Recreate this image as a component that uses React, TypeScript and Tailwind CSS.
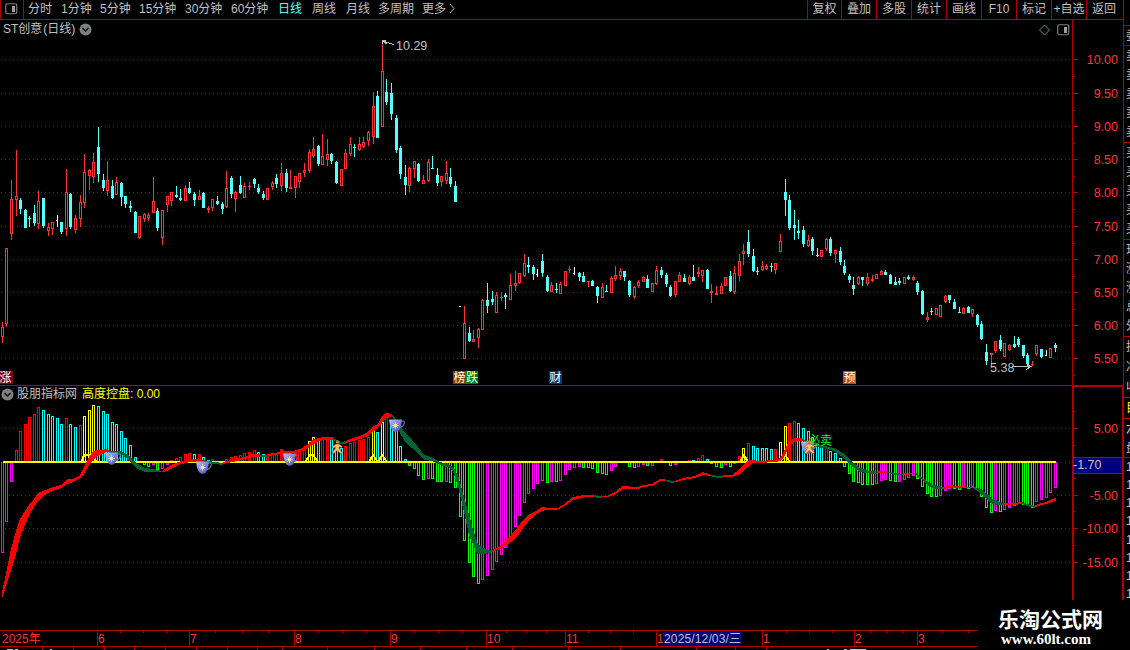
import React from 'react';

const RED = '#ff3232';
const CYAN = '#54ffff';
const FRAME = '#b00000';

const BAR_COLORS: Record<string, string> = {
    r: '#ff0000',
    c: '#00ffff',
    y: '#ffff00',
    g: '#00ff00',
    m: '#ff00ff',
};

// One entry per trading day: colour, high, body top, body bottom, low.
const CANDLES = `
r322,327,337,343 r248,248,324,327 r180,199,234,240 r150,196,200,216 c198,200,209,214 c209,210,228,228
c216,218,219,227 c205,213,223,226 r191,201,224,229 c198,198,226,228 r223,227,231,236 r222,222,229,235
w215,220,221,227 c222,222,232,234 r169,192,229,236 c193,194,227,229 r215,218,230,233 r195,202,219,227
r154,172,203,208 r169,170,176,190 r153,162,177,183 c127,147,174,182 c174,180,188,191 r161,180,191,196
c180,186,198,199 r177,182,195,195 c182,183,197,206 c196,196,204,208 c201,206,208,212 c211,212,233,233
r216,216,238,239 r213,214,219,222 r213,215,218,221 r177,201,213,213 c208,211,228,231 r210,210,238,245
r196,196,205,212 r192,192,201,206 c186,195,197,198 c189,198,200,201 r185,188,201,201 c182,188,193,194
c192,194,200,206 r190,196,200,200 c192,193,208,208 r206,208,210,213 r199,199,208,211 c196,201,204,205
c202,204,209,214 r171,188,207,208 c176,178,194,198 r191,192,199,212 c176,185,193,194 r183,186,198,198
r182,186,187,190 c178,179,184,188 c184,188,192,194 c191,194,198,200 r188,188,200,200 r181,183,187,190
c174,178,184,188 r163,173,186,191 c169,173,188,192 r170,187,189,189 r176,176,188,198 r173,173,182,188
r163,170,173,177 r149,152,171,173 r137,149,156,158 c145,146,164,166 r134,156,165,165 r139,154,160,166
c153,154,161,164 c161,162,183,184 r169,169,186,186 r149,153,169,169 r137,144,154,156 c144,147,148,157
r137,144,150,151 r137,142,147,148 r131,132,141,146 r92,106,137,144 c91,96,138,138 r43,71,127,127
c79,92,102,105 c83,93,114,120 c115,118,150,153 c146,148,174,179 c165,177,185,195 r167,168,186,192
r161,161,169,178 c163,164,181,182 r175,180,184,184 r159,162,181,182 c156,168,169,169 c168,175,183,186
r176,176,182,187 r161,173,181,184 c168,177,184,187 c181,186,202,202 w306,306,307,307 r306,323,359,359
c327,333,341,342 r330,339,342,342 r328,329,338,348 r299,300,330,330 c283,300,306,313 c291,299,302,305
r292,295,313,313 r292,297,298,301 c293,295,297,309 r274,285,300,300 r271,283,286,291 r273,273,283,284
r254,263,276,277 c257,265,267,273 c265,267,274,280 w269,274,275,277 c254,261,273,277 c275,277,291,292
r282,285,292,292 c283,289,290,293 r282,284,294,294 r271,271,286,286 r266,269,270,273 w267,273,274,275
c272,273,277,281 c272,276,282,282 r281,281,282,287 c280,281,286,286 c286,287,296,303 r283,287,298,298
c285,291,292,292 r276,278,293,293 r266,275,279,281 r268,271,276,280 c271,271,277,281 c280,281,295,297
r286,287,297,299 r280,282,286,288 r276,277,282,282 c275,279,288,288 r283,283,292,292 r266,270,284,285
c267,270,275,278 c273,275,284,287 c285,287,296,297 r281,281,295,297 r272,275,282,282 c274,278,282,282
r275,277,284,285 c265,277,281,281 r267,272,274,277 r270,270,276,282 c269,270,289,289 r284,291,293,303
r286,293,295,295 r283,286,294,294 r277,277,286,286 c271,276,291,292 r266,273,292,294 r254,261,276,281
r244,251,254,265 c230,242,254,257 c249,256,271,272 c267,271,272,275 r261,266,270,271 r264,266,269,270
c263,266,267,272 r263,263,270,274 r234,241,252,252 c179,192,200,216 c195,200,228,230 c210,225,228,240
c220,231,233,239 c226,230,244,247 r235,240,246,247 c237,239,251,255 c248,255,256,257 r250,250,257,257
r238,239,249,251 c237,239,253,256 r250,250,254,263 c247,251,262,265 c260,266,273,275 c274,276,280,283
c277,285,289,295 r276,277,284,285 c277,277,280,286 r273,277,284,286 r275,279,281,282 r274,274,279,279
r270,271,275,275 c270,272,275,275 c274,275,284,284 c277,282,285,285 c278,281,283,285 r277,277,284,284
c275,277,279,280 r276,277,280,281 c281,283,292,295 c290,291,314,315 r312,317,320,322 c308,311,312,315
r308,308,315,315 r305,305,317,317 r295,296,302,303 c295,295,300,303 c299,302,309,309 c307,312,313,313
r307,308,314,314 c306,307,313,313 r309,309,314,317 c314,315,325,327 c321,324,339,340 c344,352,361,365
r353,353,355,364 r341,341,351,353 c335,340,349,351 r343,343,357,357 r344,345,350,351 c336,344,347,348
c337,339,345,347 c345,345,356,358 c353,355,364,366 r361,364,365,366 r345,345,354,356 c349,349,357,358
w350,355,356,356 r348,348,358,358 c343,345,348,352`
    .trim()
    .split(/\s+/)
    .map(s => ({ kind: s[0], v: s.slice(1).split(',').map(Number) }));

// Histogram: colour and the y where the bar ends, "-" for an empty day.
const BARS = `
m553 m522 m482 r450 r431 r424 r417 r414 r407 c410 c414 c416 c418 c424 r418 c424 c427 r425 y416 y410
y405 c406 c411 c414 c422 c424 c431 c438 c445 c457 - g465 g467 m465 g470 m469 m465 r460 r458 r457
r454 r453 c454 r454 c457 c460 r459 - - r459 r457 r456 r455 r453 r452 r450 c452 c454 r454 r453
r453 r449 c451 c452 r452 r451 r450 y441 y437 c438 r438 r438 c439 c447 c448 r446 r443 r442 r440 r439
r437 y431 c432 y422 r415 c422 c429 c446 c459 g466 g469 g476 g480 m479 g479 g482 g482 m482 g483 g488
g517 g541 g563 g577 g584 m580 m576 m570 m562 m555 m548 m537 m527 m516 m503 m494 m489 m484 m481 g483
m482 g482 m481 m475 m470 m468 m467 g468 g468 g469 g473 g474 g475 m471 m467 - - g467 g468 m467
m465 g466 m466 - r459 - g466 m465 - - r460 c460 r458 r455 c459 g464 g467 g468 m465 g467
m464 r456 y448 r443 c446 c448 c448 c448 c449 r449 y442 y426 r423 r421 c423 c428 c431 c437 c444 c447
r447 c451 c453 c458 g467 g474 g482 g483 g485 g485 g485 m484 m481 m480 g481 g482 m482 m480 m478 m476
g479 g487 g494 g497 g497 m496 m491 m489 g489 g490 m488 g489 m487 g489 g497 g508 g513 m511 g512 m510
m508 m506 m504 g505 g506 g508 m502 m500 m498 m493 m488`
    .trim()
    .split(/\s+/);

// Trend ribbon segments: colour, then x, upper edge, lower edge.
const RIBBON: [string, number[][]][] = [
    ['r', [[2, 592, 599], [6, 574, 586], [11, 549, 571], [16, 531, 554], [20, 519, 537], [25, 511, 525], [29, 505, 516], [34, 499, 507], [38, 493, 501], [43, 491, 496], [52, 487.5, 491], [61, 485, 488], [67, 479, 484], [73, 479, 482], [80, 475.5, 478.5], [84, 467, 474], [89, 457, 465], [93, 451, 460], [98, 450, 456], [107, 449, 452], [110, 450.5, 453]]],
    ['g', [[110, 450.5, 452.5], [120, 451, 454], [127, 454, 458], [133, 460, 465], [138, 464, 469], [144, 467.5, 471.5], [152, 469, 472], [160, 470.5, 472.5], [163, 470.5, 472]]],
    ['r', [[163, 470.5, 472.5], [171, 465, 469], [180, 461.5, 464.5], [190, 459, 462], [200, 459.5, 461.5], [203, 460.5, 462]]],
    ['g', [[203, 460, 462], [215, 462, 464], [223, 463, 465]]],
    ['r', [[223, 462, 464], [235, 459, 461.5], [245, 456.5, 459], [253, 454, 456.5], [260, 454.5, 456.5]]],
    ['g', [[260, 455, 456.5], [268, 455, 457]]],
    ['r', [[268, 454.5, 456], [275, 453, 455], [282, 451, 453.5], [292, 451.5, 453.5], [300, 449, 452], [308, 444.5, 448], [313, 440, 445], [318, 438, 441.5], [323, 437, 439.5], [333, 437.5, 439.5]]],
    ['g', [[333, 438, 440], [341, 442, 444.5], [346, 441, 443.5]]],
    ['r', [[346, 441, 443], [353, 438, 441], [362, 435, 438.5], [368, 432, 436], [373, 426.5, 432], [378, 424, 428], [382, 416.5, 423], [386, 413, 418.5], [391, 414, 416.5]]],
    ['g', [[391, 414, 416], [393, 415, 418], [398, 422, 429], [405, 433, 442], [412, 440, 448], [418, 447, 453], [424, 455, 459.5], [432, 457.5, 461], [440, 462, 465], [448, 464, 467], [453, 467, 471], [458, 475, 486], [464, 497, 512], [469, 515, 535], [474, 533, 547], [478, 544, 554.5], [483, 548, 554], [491, 550.5, 553]]],
    ['r', [[491, 550.5, 552.5], [500, 546, 549], [508, 538.5, 544.5], [517, 528, 537], [523, 520, 528], [530, 514, 519.5], [537, 510.5, 514], [542, 507, 511], [548, 508, 509.5], [558, 508, 509.5], [563, 505, 507], [573, 497, 500], [583, 495, 497.5], [593, 495, 496.5]]],
    ['g', [[593, 495, 496.5], [598, 496, 498], [602, 496, 497.5]]],
    ['r', [[602, 496, 497.5], [608, 495.5, 497], [615, 492, 494.5], [622, 486.5, 489.5], [626, 486, 488.5], [637, 487.5, 489], [643, 485, 487], [652, 484, 486], [660, 479, 481.5], [665, 479.5, 481]]],
    ['g', [[665, 479.5, 481], [672, 481, 483], [676, 480.5, 482]]],
    ['r', [[676, 480.5, 482], [683, 478, 480], [695, 476, 478], [703, 472, 475], [710, 474.5, 476]]],
    ['g', [[710, 474.5, 476], [718, 476, 478], [723, 476, 477.5]]],
    ['r', [[723, 475.5, 477], [732, 475, 477], [740, 469, 474], [747, 461.5, 468], [752, 460, 463.5], [760, 461, 463], [775, 460, 462], [780, 458, 461], [784, 451.5, 457], [788, 443, 449.5], [793, 438, 443], [798, 437.5, 441], [803, 439, 441]]],
    ['g', [[803, 439, 441], [816, 444, 446.5], [827, 446.5, 449], [835, 448.5, 451.5], [843, 453, 457.5], [851, 460.5, 466], [860, 468, 472], [870, 471, 473.5], [877, 471.5, 473.5]]],
    ['r', [[877, 471.5, 473], [883, 471, 472.5], [888, 471.5, 473]]],
    ['g', [[888, 471.5, 473], [895, 473, 475], [903, 474, 475.5]]],
    ['r', [[903, 473.5, 475], [910, 473, 474.5], [916, 472.5, 474]]],
    ['g', [[916, 473, 475], [920, 476, 478], [927, 481, 485], [933, 485, 488.5], [943, 487, 489]]],
    ['r', [[943, 487, 489], [950, 485, 487.5], [957, 486, 487.5], [974, 487, 488]]],
    ['g', [[974, 486.5, 488.5], [983, 490.5, 495.5], [992, 498.5, 504], [1003, 503, 505.5]]],
    ['r', [[1003, 503.5, 505.5], [1015, 503, 505], [1021, 501.5, 504]]],
    ['g', [[1021, 502, 504], [1027, 504, 506], [1035, 506, 508]]],
    ['r', [[1035, 505, 507], [1042, 503, 505], [1048, 501, 503.5], [1056, 497.5, 500.5]]],
];

const PRICE_ROWS: [number, string][] = [
    [59, '10.00'], [93, '9.50'], [126, '9.00'], [159, '8.50'], [192, '8.00'],
    [226, '7.50'], [259, '7.00'], [292, '6.50'], [325, '6.00'], [358, '5.50'],
];

const IND_ROWS: [number, string][] = [
    [428, '5.00'], [462, ''], [495, '-5.00'], [528, '-10.00'], [562, '-15.00'],
];

const dayX = (i: number) => Math.floor(2.3 + i * 4.578);

const GridRow = ({ y }: { y: number }) => (
    <line x1={1} x2={1071} y1={y + 0.5} y2={y + 0.5} stroke={FRAME} strokeDasharray="1 3" />
);

const AxisRow = ({ y, label, half }: { y: number; label: string; half: number }) => (
    <g>
        <rect x={1073} y={y} width={5} height={1} fill={FRAME} />
        <rect x={1073} y={y + half} width={2} height={1} fill={FRAME} />
        <text x={1118} y={y + 5} textAnchor="end" fontSize={12.5} fill={RED}>{label}</text>
    </g>
);

const Candle = ({ i, kind, v }: { i: number; kind: string; v: number[] }) => {
    const x = dayX(i);
    const [high, top, bottom, low] = v;
    const h = bottom - top;
    if (kind === 'w') {
        return (
            <g fill="#ffffff">
                <rect x={x} y={high} width={1} height={low - high} />
                <rect x={x - 1} y={top} width={2} height={1} />
            </g>
        );
    }
    if (kind === 'c') {
        return (
            <g fill={CYAN}>
                <rect x={x} y={high} width={1} height={low - high} />
                <rect x={x - 1} y={top} width={3} height={h} />
            </g>
        );
    }
    return (
        <g fill={RED}>
            <rect x={x} y={high} width={1} height={low - high} />
            <rect x={x - 1} y={top} width={3} height={h} />
            {h > 2 && <rect x={x} y={top + 1} width={1} height={h - 2} fill="#000000" />}
        </g>
    );
};

const Bar = ({ i, code }: { i: number; code: string }) => {
    if (code === '-') return null;
    const x = dayX(i);
    const end = Number(code.slice(1));
    const top = Math.min(end, 462);
    const h = Math.max(end, 462) - top;
    return (
        <g>
            <rect x={x - 1} y={top} width={3} height={h} fill={BAR_COLORS[code[0]]} />
            <rect x={x} y={end < 462 ? top + 1 : top} width={1} height={Math.max(h - 1, 0)} fill="#000000" />
        </g>
    );
};

const Cup = ({ x, y }: { x: number; y: number }) => (
    <g transform={`translate(${x} ${y})`}>
        <path d="M12 2.5 Q15.8 1 15.3 4 Q14.3 8 10 8.8" fill="none" stroke="#6a6f98" strokeWidth={1.2} />
        <path d="M0 0.5 H13 L12.3 5.5 Q11.5 10 9.5 11.8 Q6.5 13.5 3.8 11.8 Q1.6 9.5 0.8 5.5 Z" fill="url(#cup)" />
        <path d="M6.5 3 V10 M3 6.5 H10 M4.2 4.2 L8.8 8.8 M8.8 4.2 L4.2 8.8" stroke="#dcd4c4" strokeWidth={0.8} />
        <circle cx={6.5} cy={6.5} r={1.7} fill="#ffe680" />
    </g>
);

const Runner = ({ x, y }: { x: number; y: number }) => (
    <g transform={`translate(${x} ${y})`}>
        <circle cx={6.5} cy={2} r={1.8} fill="#d08a28" />
        <path
            d="M5 4 L8 4 L11.5 6.5 L10.5 7.5 L8 7 L8.5 9 L11.5 13 L10 14 L6 10.5 L3 13.5 L1 13 L4 9 L4.5 7 L2 8.5 L1 7 Z"
            fill="#ffc070"
            stroke="#8a4a10"
            strokeWidth={0.6}
        />
    </g>
);

const ToggleIcon = () => (
    <svg width="13" height="12" viewBox="0 0 13 12" className="shrink-0">
        <rect x="0.75" y="0.75" width="11" height="10" rx="1.5" fill="none" stroke="#808080" strokeWidth="1.2" />
        <rect x="7" y="3" width="3" height="6" fill="#a0a0a0" />
    </svg>
);

const DropIcon = () => (
    <svg width="13" height="13" viewBox="0 0 13 13" className="shrink-0">
        <circle cx="6.5" cy="6.5" r="6" fill="#808080" />
        <path d="M3.5 5 L6.5 8 L9.5 5" fill="none" stroke="#101010" strokeWidth="1.5" />
    </svg>
);

const PERIODS: [string, string][] = [
    ['分时', 'w-[33px]'], ['1分钟', 'w-[39px]'], ['5分钟', 'w-[39px]'], ['15分钟', 'w-[46px]'],
    ['30分钟', 'w-[46px]'], ['60分钟', 'w-[47px]'], ['日线', 'w-[34px] text-[#54ffff]'], ['周线', 'w-[34px]'],
    ['月线', 'w-[32px]'], ['多周期', 'w-[44px]'], ['更多', 'w-[26px]'],
];

const TOOLS = ['复权', '叠加', '多股', '统计', '画线', 'F10', '标记', '+自选', '返回'];

const Header = () => (
    <div className="flex h-5 border-b border-[#b00000] text-xs leading-[19px] text-[#c0c0c0]">
        <div className="flex w-6 items-center border-x border-[#b00000] pb-0.5 pl-1">
            <ToggleIcon />
        </div>
        <div className="flex flex-1 whitespace-nowrap pl-1">
            {PERIODS.map(([label, cls]) => <span key={label} className={cls}>{label}</span>)}
            <svg width="8" height="12" viewBox="0 0 8 12" className="mt-[3px]">
                <path d="M2 1 L6 5.5 L2 10" fill="none" stroke="#c0c0c0" />
            </svg>
        </div>
        <div className="flex">
            {TOOLS.map(t => (
                <span key={t} className="w-[35px] whitespace-nowrap border-l border-[#b00000] text-center first:w-[34px]">{t}</span>
            ))}
            <span className="w-0.5" />
        </div>
    </div>
);

const EVENTS: [number, string, string][] = [
    [0, '涨', '#800000'], [453, '榜', '#804000'], [465.5, '跌', '#008000'], [549, '财', '#003870'], [843, '预', '#c04810'],
];

const PricePanel = () => (
    <div className="relative h-[365px]">
        <svg width="1123" height="365" viewBox="0 20 1123 365" shapeRendering="crispEdges" className="block">
            {PRICE_ROWS.map(([y]) => <GridRow key={y} y={y} />)}
            <rect x={1072} y={20} width={1} height={365} fill={FRAME} />
            {PRICE_ROWS.map(([y, label]) => <AxisRow key={y} y={y} label={label} half={17} />)}
            {CANDLES.map((c, i) => <Candle key={i} i={i} kind={c.kind} v={c.v} />)}
            <path d="M382.5 44 V40.5 H386 M383 41 L387 44 M384 41.5 L394 44.5" fill="none" stroke="#c0c0c0" />
            <text x={396} y={50} fontSize={12.5} fill="#c0c0c0">10.29</text>
            <text x={990} y={372} fontSize={12.5} fill="#c0c0c0">5.38</text>
            <path d="M1012 366.5 H1031 M1026 363.5 L1031 366.5 L1026 369.5" fill="none" stroke="#c0c0c0" />
            {EVENTS.map(([x, label, fill]) => (
                <g key={label}>
                    <rect x={x} y={371} width={12.5} height={13} fill={fill} />
                    <text x={x === 0 ? -0.5 : x + 0.5} y={382} fontSize={12} fill="#ffffff">{label}</text>
                </g>
            ))}
        </svg>
        <div className="absolute left-[3px] top-0 flex items-center gap-1 text-xs leading-[19px] text-[#c0c0c0]">
            <span>ST创意<span className="pl-px">(日线)</span></span>
            <DropIcon />
        </div>
        <div className="absolute left-[1039px] top-1 flex items-center gap-[7px]">
            <svg width="11" height="12" viewBox="0 0 11 12">
                <path d="M5.5 1 L10.5 6 L5.5 11 L0.5 6 Z" fill="none" stroke="#808080" />
            </svg>
            <ToggleIcon />
        </div>
    </div>
);

const IndicatorPanel = () => (
    <div className="relative h-[245px] border-t border-[#b00000]">
        <svg width="1123" height="244" viewBox="0 386 1123 244" shapeRendering="crispEdges" className="block">
            <defs>
                <linearGradient id="cup" x1="0" y1="0" x2="1" y2="1">
                    <stop offset="0" stopColor="#b4c4f4" />
                    <stop offset="1" stopColor="#4848c0" />
                </linearGradient>
            </defs>
            {IND_ROWS.map(([y]) => <GridRow key={y} y={y} />)}
            <rect x={1072} y={386} width={51} height={1} fill={FRAME} />
            <rect x={1072} y={386} width={2} height={244} fill={FRAME} />
            <rect x={1122} y={386} width={1} height={244} fill={FRAME} />
            {IND_ROWS.map(([y, label]) => <AxisRow key={y} y={y} label={label} half={-17} />)}
            <rect x={1074} y={457} width={48} height={17} fill={FRAME} />
            <rect x={1074} y={458} width={48} height={15} fill="#000080" />
            <text x={1073} y={469} fontSize={12.5} fill="#c0c0c0">-1.70</text>

            {BARS.map((code, i) => <Bar key={i} i={i} code={code} />)}
            <rect x={3} y={461} width={1053} height={2} fill="#ffff00" />
            <path
                d="M82 461 L84 455 H92 L96 461 M305 462 L310 455 H313 L318 462 M369 462 L373 455 L378 462 L382 455 L387 462 M740 462 L744 455 L748 462 M780 462 L785 455 L790 462"
                fill="none"
                stroke="#ffff00"
                strokeWidth={2}
            />
            {RIBBON.map(([color, pts], i) => (
                <polygon
                    key={i}
                    fill={color === 'r' ? '#ff0000' : '#006432'}
                    points={[...pts.map(p => [p[0], p[1]]), ...[...pts].reverse().map(p => [p[0], p[2]])].join(' ')}
                />
            ))}
            <g shapeRendering="auto">
                <Cup x={105} y={452} />
                <Cup x={196} y={461} />
                <Cup x={283} y={453} />
                <Cup x={389} y={419} />
                <Cup x={801} y={441} />
                <Runner x={331} y={440} />
                <text x={808} y={444.5} fontSize={12} fill="#00ff00">必卖</text>
                <Runner x={803} y={440} />
            </g>
        </svg>
        <div className="absolute left-px top-0 flex items-center gap-[3px] text-xs leading-[17px] text-[#c0c0c0]">
            <DropIcon />
            <span>股朋指标网</span>
            <span className="pl-0.5 text-[#ffff00]">高度控盘: <span>0.00</span></span>
        </div>
    </div>
);

const MONTHS: [number, string][] = [
    [97, '6'], [189, '7'], [294, '8'], [390, '9'], [486, '10'], [565, '11'], [656, '1'], [762, '1'], [854, '2'], [917, '3'],
];

const MINOR = [120, 143, 166, 215, 242, 268, 318, 342, 366, 414, 438, 462, 506, 526, 546, 588, 610, 633, 786, 809, 832, 870, 886, 902, 942, 968];

const Timeline = () => (
    <svg width="1123" height="20" viewBox="0 630 1123 20" shapeRendering="crispEdges" className="block">
        <rect x={0} y={630} width={978} height={1} fill={FRAME} />
        <rect x={0} y={646} width={978} height={1} fill={FRAME} />
        {MINOR.map(x => <rect key={x} x={x} y={631} width={1} height={2} fill={FRAME} />)}
        {[42, 73, 104, 134, 165, 196, 227, 257, 282, 327, 374, 420, 466, 512, 568, 620, 696, 735, 766].map(x => (
            <rect key={x} x={x} y={647} width={1} height={3} fill={FRAME} />
        ))}
        <path d="M7 649.5 H13 M15 649.5 H18 M50 649.5 H52 M827 649.5 H829 M844 649.5 H847 M850 649.5 H866" stroke="#c0c0c0" />
        <rect x={850} y={649} width={5} height={1} fill={CYAN} />
        <text x={2} y={643} fontSize={12} fill={RED}>2025年</text>
        {MONTHS.map(([x, label]) => (
            <g key={x}>
                <rect x={x} y={631} width={1} height={15} fill={FRAME} />
                <text x={x + 1} y={643} fontSize={12} fill={RED}>{label}</text>
            </g>
        ))}
        <rect x={663} y={631} width={79} height={15} fill="#000080" />
        <text x={664} y={642.5} fontSize={12} textLength={77} fill="#c0c0c0">2025/12/03/三</text>
    </svg>
);

// Left edge of the quote panel; only the first few pixels of each label fit.
const QUOTE_GROUPS: [string, string][] = [
    ['h-[20px]', '委'],
    ['h-[97px]', '卖卖卖卖卖'],
    ['h-[97px]', '买买买买买'],
    ['h-[97px]', '现涨涨总外'],
    ['h-[61px]', '换净收'],
    ['h-[21px] text-[#ffff00]', '目'],
    ['h-[39px]', '六盘'],
    ['h-[146px]', '11111111'],
];

const QuoteStrip = () => (
    <div className="flex w-[7px] flex-col overflow-hidden border-l border-[#b00000] pt-[25px] text-xs leading-3 text-[#c0c0c0]">
        {QUOTE_GROUPS.map(([cls, chars]) => (
            <div key={chars} className={`flex shrink-0 flex-col justify-around border-t border-[#b00000] pl-0.5 ${cls}`}>
                {chars.split('').map((ch, i) => <span key={i}>{ch}</span>)}
            </div>
        ))}
    </div>
);

const App: React.FC = () => (
    <div className="relative flex h-[650px] w-[1130px] overflow-hidden bg-black font-['Liberation_Sans','Noto_Sans_CJK_SC',sans-serif]">
        <div className="flex w-[1123px] flex-col">
            <Header />
            <PricePanel />
            <IndicatorPanel />
            <Timeline />
        </div>
        <QuoteStrip />
        <div className="absolute bottom-0 right-0 flex h-[50px] w-[152px] flex-col bg-black pl-5 pt-1.5 text-white">
            <span className="font-['Noto_Sans_CJK_SC',sans-serif] text-[21px] font-bold leading-[25px]">乐淘公式网</span>
            <span className="pl-[3px] font-['Liberation_Serif',serif] text-[15px] font-bold leading-[17px]">www.60lt.com</span>
        </div>
    </div>
);

export default App;
